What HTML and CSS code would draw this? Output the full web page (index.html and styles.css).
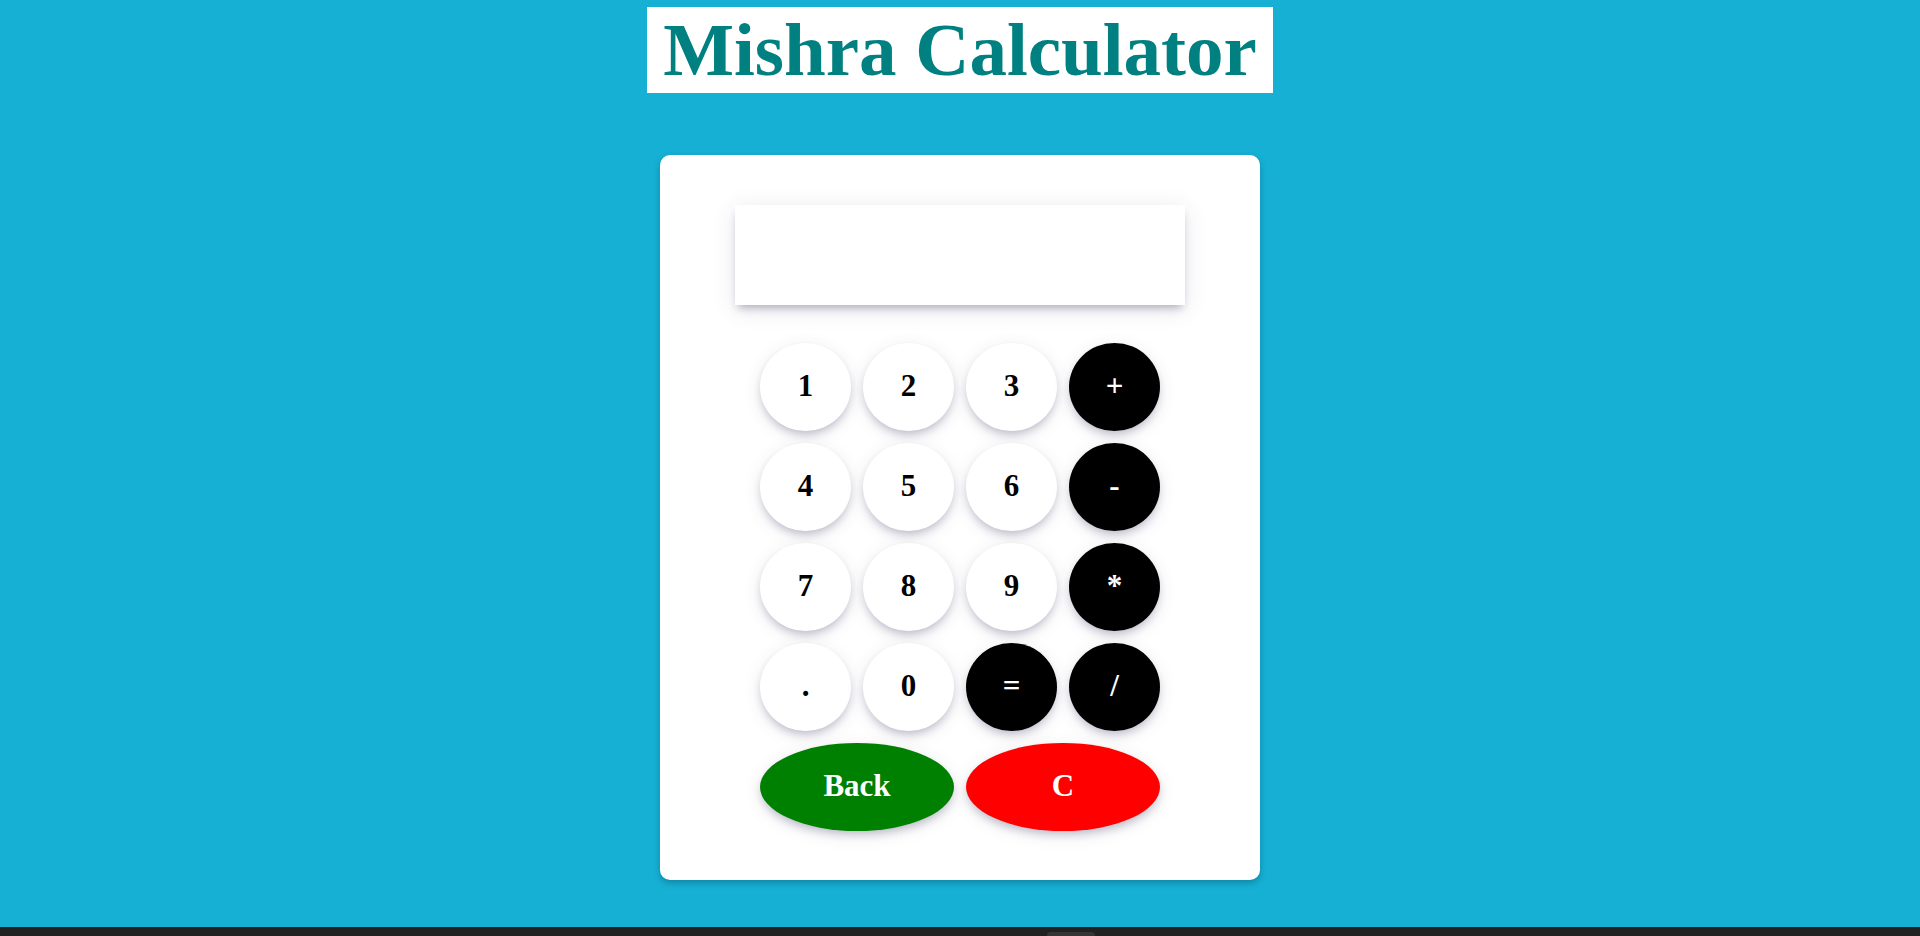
FILE: index.html
```html
<!DOCTYPE html>
<html lang="en">
<head>
<meta charset="utf-8">
<title>Mishra Calculator</title>
<link rel="stylesheet" href="styles.css">
</head>
<body>
<div class="page">
  <header class="title-wrap">
    <h1 class="title">Mishra Calculator</h1>
  </header>
  <main class="calc">
    <div class="display"></div>
    <div class="keys">
      <button class="key">1</button>
      <button class="key">2</button>
      <button class="key">3</button>
      <button class="key op">+</button>
      <button class="key">4</button>
      <button class="key">5</button>
      <button class="key">6</button>
      <button class="key op">-</button>
      <button class="key">7</button>
      <button class="key">8</button>
      <button class="key">9</button>
      <button class="key op">*</button>
      <button class="key">.</button>
      <button class="key">0</button>
      <button class="key op">=</button>
      <button class="key op">/</button>
      <button class="key wide back">Back</button>
      <button class="key wide clear">C</button>
    </div>
  </main>
  <footer class="bottom-bar"><span class="tab"></span></footer>
</div>
</body>
</html>
```
FILE: styles.css
```css
html, body {
  margin: 0;
  padding: 0;
}
body {
  background: #16b0d4;
  font-family: "Liberation Serif", "Times New Roman", serif;
}
.page {
  min-height: 100vh;
  display: flex;
  flex-direction: column;
}
.title-wrap {
  text-align: center;
  padding-top: 7px;
}
.title {
  display: inline-block;
  margin: 0;
  padding: 0 16px;
  background: #ffffff;
  color: #008080;
  font-size: 75px;
  font-weight: bold;
  line-height: normal;
}
.calc {
  width: 600px;
  box-sizing: border-box;
  margin: 62px auto 0;
  padding: 50px 0 49px;
  background: #ffffff;
  border-radius: 10px;
  box-shadow: 0 3px 6px rgba(0, 60, 80, 0.35);
  display: flex;
  flex-direction: column;
  align-items: center;
}
.display {
  width: 450px;
  height: 100px;
  background: #ffffff;
  box-shadow: 0 6px 8px -3px rgba(60, 60, 100, 0.35), 0 4px 22px rgba(60, 60, 100, 0.12);
  margin-bottom: 38px;
}
.keys {
  display: grid;
  grid-template-columns: repeat(4, 91px);
  grid-auto-rows: 88px;
  gap: 12px;
}
.key {
  border: none;
  border-radius: 50%;
  background: #ffffff;
  color: #000000;
  font-family: "Liberation Serif", "Times New Roman", serif;
  font-size: 31px;
  font-weight: bold;
  padding: 0 0 2px;
  box-shadow: 0 5px 8px -2px rgba(60, 60, 100, 0.3), 0 4px 18px rgba(60, 60, 100, 0.1);
  cursor: pointer;
}
.op {
  background: #000000;
  color: #ffffff;
}
.wide {
  grid-column: span 2;
  color: #ffffff;
}
.back {
  background: #008000;
}
.clear {
  background: #ff0000;
}
.bottom-bar {
  margin-top: auto;
  height: 9px;
  background: #212121;
  display: flex;
  justify-content: center;
  align-items: flex-end;
}
.tab {
  width: 48px;
  height: 4px;
  margin-left: 222px;
  background: #353535;
  border-radius: 4px 4px 0 0;
}
```
